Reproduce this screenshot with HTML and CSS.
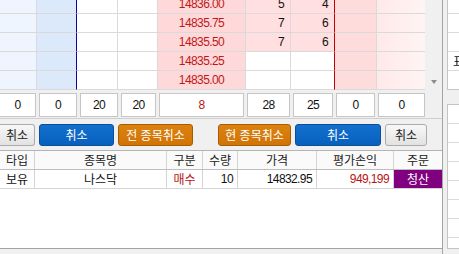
FILE: index.html
```
<!DOCTYPE html>
<html lang="ko">
<head>
  <meta charset="UTF-8" />
  <title>주문 화면</title>
  <link rel="stylesheet" href="styles.css">
</head>
<body>
  <div class="app">
    <div class="main">
      <div class="upper">
        <div class="book">
          <div class="book-grid">
            <div class="row">
              <div class="c c1"></div><div class="c c2"></div><div class="c c3"></div><div class="c c4"></div>
              <div class="c c5">14836.00</div><div class="c c6">5</div><div class="c c7">4</div>
              <div class="c c8"></div><div class="c c9"></div>
            </div>
            <div class="row">
              <div class="c c1"></div><div class="c c2"></div><div class="c c3"></div><div class="c c4"></div>
              <div class="c c5">14835.75</div><div class="c c6">7</div><div class="c c7">6</div>
              <div class="c c8"></div><div class="c c9"></div>
            </div>
            <div class="row">
              <div class="c c1"></div><div class="c c2"></div><div class="c c3"></div><div class="c c4"></div>
              <div class="c c5">14835.50</div><div class="c c6">7</div><div class="c c7">6</div>
              <div class="c c8"></div><div class="c c9"></div>
            </div>
            <div class="row empty">
              <div class="c c1"></div><div class="c c2"></div><div class="c c3"></div><div class="c c4"></div>
              <div class="c c5">14835.25</div><div class="c c6"></div><div class="c c7"></div>
              <div class="c c8"></div><div class="c c9"></div>
            </div>
            <div class="row empty">
              <div class="c c1"></div><div class="c c2"></div><div class="c c3"></div><div class="c c4"></div>
              <div class="c c5">14835.00</div><div class="c c6"></div><div class="c c7"></div>
              <div class="c c8"></div><div class="c c9"></div>
            </div>
          </div>
          <div class="scrollbar"><span class="arrow"></span></div>
        </div>

        <div class="totals">
          <div class="box w1">0</div>
          <div class="box w2">0</div>
          <div class="box w3">20</div>
          <div class="box w4">20</div>
          <div class="box w5 red">8</div>
          <div class="box w6">28</div>
          <div class="box w7">25</div>
          <div class="box w8">0</div>
          <div class="box w9">0</div>
        </div>
      </div>

      <div class="actions">
        <button class="btn gray first">취소</button>
        <button class="btn blue b-wide">취소</button>
        <button class="btn orange b-wide">전 종목취소</button>
        <button class="btn orange b-cur">현 종목취소</button>
        <button class="btn blue b-big">취소</button>
        <button class="btn gray b-small">취소</button>
      </div>

      <div class="positions">
        <div class="prow head">
          <div class="p">타입</div>
          <div class="p">종목명</div>
          <div class="p">구분</div>
          <div class="p">수량</div>
          <div class="p">가격</div>
          <div class="p">평가손익</div>
          <div class="p">주문</div>
        </div>
        <div class="prow">
          <div class="p">보유</div>
          <div class="p">나스닥</div>
          <div class="p red">매수</div>
          <div class="p num">10</div>
          <div class="p num">14832.95</div>
          <div class="p num red">949,199</div>
          <div class="p close">청산</div>
        </div>
      </div>
    </div>

    <div class="side">
      <div class="side-top">
        <div class="srow"></div>
        <div class="srow"></div>
        <div class="srow"></div>
        <div class="srow">표준</div>
        <div class="srow"></div>
      </div>
      <div class="side-bottom">
        <div class="srow"></div>
        <div class="srow"></div>
        <div class="srow"></div>
        <div class="srow"></div>
        <div class="srow"></div>
        <div class="srow"></div>
        <div class="srow"></div>
      </div>
    </div>
  </div>
</body>
</html>
```

FILE: styles.css
```
* {
  box-sizing: border-box;
}

body {
  margin: 0;
  background: #f0f0f0;
  font-family: "Liberation Sans", "Noto Sans CJK KR", sans-serif;
  font-size: 12px;
  color: #111;
  overflow: hidden;
}

.app {
  display: flex;
  height: 254px;
}

.main {
  width: 443px;
  height: 254px;
  border-right: 1px solid #a4a4a4;
  flex-shrink: 0;
}

.upper {
  padding-bottom: 1px;
  border-bottom: 1px solid #cfcfcf;
}

/* order book */
.book {
  display: flex;
  height: 90px;
  overflow: hidden;
  background: #fff;
}

.book-grid {
  width: 425px;
  margin-top: -5px;
}

.row {
  display: grid;
  grid-template-columns: 37px 40px 41px 40px 88px 45px 44px 42px 48px;
}

.c {
  height: 19px;
  line-height: 19px;
  border-right: 1px solid #dadada;
  border-bottom: 1px solid #dadada;
  padding: 0 6px;
  text-align: right;
  letter-spacing: -0.6px;
  overflow: hidden;
  white-space: nowrap;
}

.c1 { background: #eff5fe; }
.c2 { background: #dbe9fb; border-right-color: #0a0a96; }
.c3, .c4 { background: #fff; }
.c5 { background: #ffd9d9; color: #c01818; text-align: center; }
.c6 { background: #ffdfdf; }
.c7 { background: #ffdfdf; border-right-color: #c40000; }
.c8 { background: #ffdcdc; }
.c9 { background: linear-gradient(to right, #ffe9e9, #fff4f4); border-right: none; }

.row.empty .c6,
.row.empty .c7 {
  background: #fff;
}

.scrollbar {
  width: 17px;
  background: #f0f0f0;
  display: flex;
  align-items: flex-end;
  justify-content: center;
  padding-bottom: 6px;
}

.arrow {
  width: 0;
  height: 0;
  border-left: 3px solid transparent;
  border-right: 3px solid transparent;
  border-top: 4px solid #8c8c8c;
}

/* totals */
.totals {
  display: flex;
  gap: 3px;
  margin-top: 3px;
  height: 24px;
}

.box {
  height: 24px;
  line-height: 22px;
  background: #fff;
  border: 1px solid #c6c6c6;
  text-align: center;
  letter-spacing: -0.6px;
}

.w1 { width: 36px; border-left: none; }
.w2 { width: 38px; }
.w3 { width: 38px; }
.w4 { width: 35px; }
.w5 { width: 85px; }
.w6 { width: 43px; }
.w7 { width: 40px; }
.w8 { width: 39px; }
.w9 { width: 47px; }

.red {
  color: #b81414;
}

/* buttons */
.actions {
  display: flex;
  gap: 4px;
  margin-top: 5px;
  height: 22px;
}

.btn {
  height: 22px;
  padding: 0;
  border-radius: 3px;
  font-family: "Noto Sans CJK KR", sans-serif;
  font-size: 12px;
  line-height: 20px;
  color: #fff;
  cursor: pointer;
}

.btn.gray {
  background: linear-gradient(#f8f8f8, #e2e2e2);
  border: 1px solid #ababab;
  color: #222;
}

.btn.blue {
  background: linear-gradient(#1270cf, #0860bd);
  border: 1px solid #0a4f98;
}

.btn.orange {
  background: linear-gradient(#dc820f, #d07406);
  border: 1px solid #a75c02;
}

.first {
  width: 35px;
  border-left: none !important;
  border-radius: 0 3px 3px 0;
}

.b-wide { width: 75px; }
.b-cur { width: 73px; margin-left: 21px; }
.b-big { width: 86px; }
.b-small { width: 42px; }

/* positions */
.positions {
  margin-top: 4px;
  height: 99px;
  background: #fff;
  border-top: 1px solid #b4b4b4;
  border-bottom: 1px solid #a4a4a4;
}

.prow {
  display: grid;
  grid-template-columns: 35px 132px 36px 35px 79px 77px 48px;
  height: 19px;
  border-bottom: 1px solid #d4d4d4;
}

.prow.head {
  background: #fafafa;
  border-bottom-color: #bdbdbd;
  color: #222;
}

.p {
  line-height: 18px;
  text-align: center;
  border-right: 1px solid #d4d4d4;
  font-family: "Noto Sans CJK KR", sans-serif;
  white-space: nowrap;
  overflow: hidden;
}

.p:last-child {
  border-right: none;
}

.p.num {
  font-family: "Liberation Sans", sans-serif;
  text-align: right;
  padding-right: 4px;
  letter-spacing: -0.6px;
}

.p.close {
  background: #800080;
  color: #fff;
}

/* side panel */
.side {
  margin-left: 4px;
  flex: 1;
}

.side-top {
  height: 90px;
  overflow: hidden;
  background: #fff;
  border-left: 1px solid #c4c4c4;
  border-bottom: 1px solid #c4c4c4;
}

.side-top .srow:first-child {
  margin-top: -5px;
}

.srow {
  height: 19px;
  line-height: 18px;
  border-bottom: 1px solid #dadada;
  padding-left: 5px;
  font-family: "Noto Sans CJK KR", sans-serif;
  white-space: nowrap;
  overflow: hidden;
}

.side-bottom {
  margin-top: 14px;
  height: 145px;
  background: #fff;
  border-left: 1px solid #c4c4c4;
  border-top: 1px solid #c4c4c4;
  border-bottom: 1px solid #c4c4c4;
}
```
